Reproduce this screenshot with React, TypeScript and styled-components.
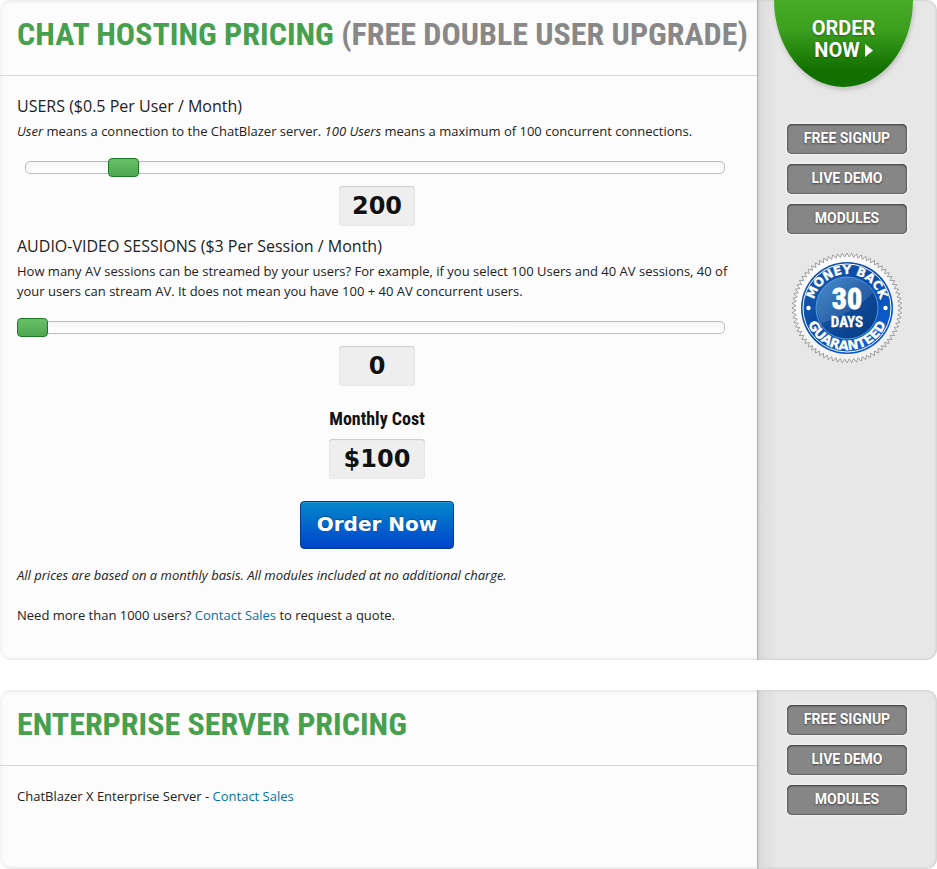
import React, { useId, useState } from "react";
import styled, { createGlobalStyle, css } from "styled-components";

const GlobalStyle = createGlobalStyle`
  *, *::before, *::after { box-sizing: border-box; }
  body {
    margin: 0;
    background: #fff;
    color: #222;
    font: 13px/20px "Open Sans", "Noto Sans", sans-serif;
  }
  h1, h2, h3, p { margin: 0; }
`;

const condensed = `"Roboto Condensed", "Liberation Sans Narrow", sans-serif`;

const Page = styled.main`
  display: flex;
  flex-direction: column;
  gap: 30px;
`;

const Panel = styled.section`
  display: grid;
  grid-template-columns: 1fr 180px;
  border-radius: 10px;
  overflow: hidden;
  background: #fcfcfc;
`;

const Main = styled.div`
  border-radius: 10px 0 0 10px;
  box-shadow: inset 3px 0 3px -1px #f4f4f4, inset 0 3px 3px -1px #ebebeb, inset 0 -3px 3px -2px #dedede;
`;

const Side = styled.aside<{ $plain?: boolean }>`
  display: flex;
  flex-direction: column;
  align-items: center;
  padding-top: ${(p) => (p.$plain ? 15 : 0)}px;
  border-radius: 0 10px 10px 0;
  background: linear-gradient(90deg, #d9d9d9, #e7e7e7 20px);
  box-shadow: inset 2px 0 2px -1px #aaa, inset -1px 0 3px #d4d4d4, inset 0 0 2px #c4c4c4;
`;

const Header = styled.header`
  padding: 14px 0 21px 17px;
  border-bottom: 1px solid #d8d8d8;
`;

const Title = styled.h1`
  font: 700 32px/40px ${condensed};
  color: #46a04d;
  text-transform: uppercase;
  white-space: nowrap;
`;

const TitleNote = styled.span`
  color: #888;
`;

const Body = styled.div<{ $short?: boolean }>`
  padding: 20px 20px ${(p) => (p.$short ? 63 : 35)}px 17px;
  ${(p) => p.$short && css`display: flex; flex-direction: column;`}
`;

const Subhead = styled.h2`
  font-size: 16px;
  font-weight: 400;
  line-height: 20px;
  margin-bottom: 5px;
`;

const Label = styled.label``;

const Track = styled.div`
  display: flex;
  align-items: center;
  height: 13px;
  margin: 20px 12px 12px 8px;
  border: 1px solid #bbb;
  border-radius: 5px;
  background: linear-gradient(#f5f5f5, #fff);
`;

const Range = styled.input`
  appearance: none;
  flex: 1;
  min-width: 0;
  height: 19px;
  margin: 0 0 0 -9px;
  background: none;
  cursor: pointer;

  &::-webkit-slider-thumb {
    appearance: none;
    width: 31px;
    height: 19px;
    border: 1px solid #1d7a26;
    border-radius: 4px;
    background: linear-gradient(#66c266, #4fa651);
  }
`;

const Value = styled.output<{ $wide?: boolean }>`
  display: block;
  width: ${(p) => (p.$wide ? 96 : 76)}px;
  margin: 0 auto;
  border-radius: 4px;
  background: #eee;
  box-shadow: inset 0 1px 1px #ccc, inset 0 0 1px #ccc;
  color: #111;
  font: 700 24px/40px "DejaVu Sans", sans-serif;
  text-align: center;
  text-shadow: 0 1px 0 #fff;
`;

const Users = styled.div`
  margin-bottom: 10px;
`;

const Cost = styled.h3`
  margin: 23px 0 10px;
  color: #111;
  font: 700 18px/20px ${condensed};
  text-align: center;
`;

const OrderButton = styled.button`
  display: block;
  height: 48px;
  margin: 22px auto 16px;
  padding: 0 16px 2px;
  border: 1px solid #043a91;
  border-radius: 4px;
  background: linear-gradient(#0488cc, #0044cc);
  box-shadow: inset 0 1px 0 #2a9ad6;
  color: #fff;
  font: 700 20px/44px "DejaVu Sans", sans-serif;
  text-shadow: 0 -1px 1px rgba(0, 0, 0, 0.3);
  cursor: pointer;
`;

const Note = styled.p`
  margin-bottom: 20px;
  font-style: italic;
`;

const Link = styled.a`
  color: #0073aa;
  text-decoration: none;
`;

const OrderTab = styled.a`
  width: 139px;
  height: 87px;
  margin-bottom: 37px;
  margin-right: 7px;
  padding-top: 17px;
  border-radius: 0 0 50% 50% / 0 0 100% 100%;
  background: linear-gradient(#48ac28, #3c9f1e 35%, #127000 80%, #107000);
  box-shadow: 1px 3px 4px rgba(0, 0, 0, 0.16);
  color: #fff;
  font: 700 20px/22px Roboto, sans-serif;
  text-align: center;
  text-decoration: none;
  text-shadow: 0 1px 2px rgba(0, 0, 0, 0.35);
`;

const Links = styled.nav`
  display: flex;
  flex-direction: column;
  gap: 10px;
  width: 120px;
`;

const SideLink = styled.a`
  height: 30px;
  border-radius: 5px;
  background: #868686;
  box-shadow: inset 0 1px 2px #444, inset 0 0 1px 1px #6a6a6a, 0 0 2px 1px #f4f4f4;
  color: #fff;
  font: 700 14px/29px Roboto, sans-serif;
  text-align: center;
  text-decoration: none;
  text-shadow: 0 1px 2px rgba(0, 0, 0, 0.5);
`;

const Seal = styled.svg`
  width: 120px;
  height: 120px;
  margin-top: 14px;
`;

const teeth = Array.from({ length: 144 }, (_, i) => {
  const angle = (i * Math.PI) / 72;
  const r = i % 2 ? 51 : 55;
  return `${(60 + r * Math.cos(angle)).toFixed(2)},${(60 + r * Math.sin(angle)).toFixed(2)}`;
}).join(" ");

function MoneyBackSeal() {
  return (
    <Seal viewBox="0 0 120 120" role="img" aria-label="Money back guaranteed, 30 days">
      <defs>
        <linearGradient id="ring" x1="0" y1="0" x2="1" y2="1">
          <stop offset="0" stopColor="#1c5fb0" />
          <stop offset="0.4" stopColor="#0c4ba6" />
          <stop offset="1" stopColor="#0a63e0" />
        </linearGradient>
        <linearGradient id="disc" x1="0" y1="0" x2="1" y2="1">
          <stop offset="0" stopColor="#2f80c8" />
          <stop offset="0.5" stopColor="#0d4c9c" />
          <stop offset="1" stopColor="#06397f" />
        </linearGradient>
        <linearGradient id="rim" x1="0" y1="0" x2="1" y2="1">
          <stop offset="0" stopColor="#fff" />
          <stop offset="1" stopColor="#ededed" />
        </linearGradient>
        <path id="upper" d="M26 60a34 34 0 0 1 68 0" />
        <path id="lower" d="M18 60a42 42 0 0 0 84 0" />
      </defs>
      <polygon points={teeth} fill="url(#rim)" stroke="#8c8c8c" strokeWidth="0.8" />
      <circle cx="60" cy="60" r="50" fill="url(#rim)" />
      <circle cx="60" cy="60" r="46" fill="url(#ring)" />
      <circle cx="60" cy="60" r="44" fill="none" stroke="#fff" strokeWidth="1" />
      <circle cx="60" cy="60" r="31" fill="url(#disc)" stroke="#5599dd" strokeWidth="1" />
      <path d="M30 64A30 30 0 0 1 86 45Q62 68 34 75Z" fill="#fff" opacity="0.12" />
      <circle cx="21.500" cy="60" r="2.200" fill="#fff" />
      <circle cx="98.500" cy="60" r="2.200" fill="#fff" />
      <g fill="#fff" fontWeight="700" textAnchor="middle">
        <g fontFamily="'DejaVu Sans', sans-serif" stroke="#fff" strokeWidth="0.3">
          <text fontSize="12"><textPath href="#upper" startOffset="50%">MONEY BACK</textPath></text>
          <text fontSize="13"><textPath href="#lower" startOffset="50%">GUARANTEED</textPath></text>
        </g>
        <g fontFamily="'Roboto Condensed', sans-serif" stroke="#fff">
          <text x="60" y="61" fontSize="30" strokeWidth="1">30</text>
          <text x="60" y="79" fontSize="15" strokeWidth="0.3">DAYS</text>
        </g>
      </g>
    </Seal>
  );
}

function SideLinks() {
  return (
    <Links aria-label="Quick links">
      <SideLink href="#signup">FREE SIGNUP</SideLink>
      <SideLink href="#demo">LIVE DEMO</SideLink>
      <SideLink href="#modules">MODULES</SideLink>
    </Links>
  );
}

interface AmountProps {
  label: string;
  min: number;
  max: number;
  step: number;
  value: number;
  onChange: (value: number) => void;
  children: React.ReactNode;
}

function Amount({ label, children, value, onChange, ...range }: AmountProps) {
  const id = useId();
  return (
    <>
      <Subhead><Label htmlFor={id}>{label}</Label></Subhead>
      <p>{children}</p>
      <Track>
        <Range id={id} type="range" {...range} value={value} onChange={(e) => onChange(Number(e.target.value))} />
      </Track>
      <Value htmlFor={id}>{value}</Value>
    </>
  );
}

export default function App() {
  const [users, setUsers] = useState(200);
  const [sessions, setSessions] = useState(0);

  return (
    <>
      <GlobalStyle />
      <Page>
        <Panel>
          <Main>
            <Header>
              <Title>Chat Hosting Pricing <TitleNote>(Free Double User Upgrade)</TitleNote></Title>
            </Header>
            <Body>
              <Users>
                <Amount label="USERS ($0.5 Per User / Month)" min={75} max={1000} step={25} value={users} onChange={setUsers}>
                  <em>User</em> means a connection to the ChatBlazer server. <em>100 Users</em> means a maximum of 100 concurrent connections.
                </Amount>
              </Users>
              <Amount label="AUDIO-VIDEO SESSIONS ($3 Per Session / Month)" min={0} max={500} step={5} value={sessions} onChange={setSessions}>
                How many AV sessions can be streamed by your users? For example, if you select 100 Users and 40 AV sessions, 40 of your users can stream AV. It does not mean you have 100 + 40 AV concurrent users.
              </Amount>
              <Cost>Monthly Cost</Cost>
              <Value $wide>${users * 0.5 + sessions * 3}</Value>
              <OrderButton type="button">Order Now</OrderButton>
              <Note>All prices are based on a monthly basis. All modules included at no additional charge.</Note>
              <p>Need more than 1000 users? <Link href="#sales">Contact Sales</Link> to request a quote.</p>
            </Body>
          </Main>
          <Side>
            <OrderTab href="#order">ORDER<br />NOW <svg width="8" height="13" viewBox="0 0 8 13" aria-hidden="true"><path d="M0 0 8 6.500 0 13Z" fill="#fff" /></svg></OrderTab>
            <SideLinks />
            <MoneyBackSeal />
          </Side>
        </Panel>
        <Panel>
          <Main>
            <Header><Title>Enterprise Server Pricing</Title></Header>
            <Body $short>
              <p>ChatBlazer X Enterprise Server - <Link href="#sales">Contact Sales</Link></p>
            </Body>
          </Main>
          <Side $plain><SideLinks /></Side>
        </Panel>
      </Page>
    </>
  );
}
